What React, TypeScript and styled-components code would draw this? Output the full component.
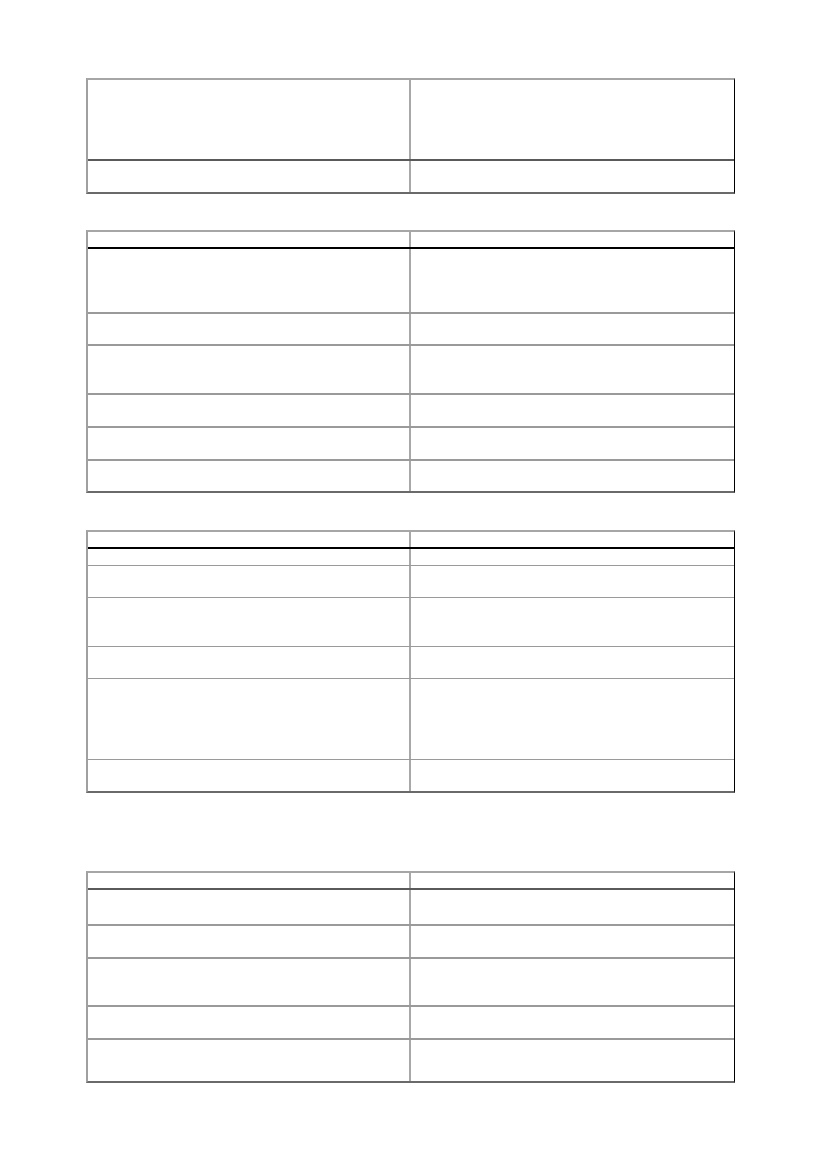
import React from 'react';
import styled, { createGlobalStyle } from 'styled-components';

const GlobalStyle = createGlobalStyle`
  html, body {
    margin: 0;
    padding: 0;
    background: #ffffff;
    font-family: "Liberation Sans", Arial, sans-serif;
  }
  * {
    box-sizing: border-box;
  }
`;

const Page = styled.main`
  width: 826px;
  min-height: 1169px;
  padding: 78px 0 0 86px;
  display: flex;
  flex-direction: column;
`;

const Table = styled.section<{ gap: number }>`
  width: 649px;
  margin-top: ${props => props.gap}px;
  border-top: 2px solid #a6a6a6;
  border-left: 2px solid #a0a0a0;
  border-right: 1px solid #000000;
  border-bottom: 2px solid #6a6a6a;
  display: flex;
  flex-direction: column;
`;

const Row = styled.div<{ h: number; line?: string; thick?: boolean }>`
  display: grid;
  grid-template-columns: 323px 1fr;
  height: ${props => props.h}px;
  border-top: ${props => (props.line ? `${props.thick ? 2 : 1}px solid ${props.line}` : 'none')};
`;

const Cell = styled.div`
  border-right: 2px solid #a8a8a8;
  &:last-child {
    border-right: none;
  }
`;

type TableSpec = {
  gap: number;
  header?: string;
  rowLine: string;
  rows: number[];
};

const tables: TableSpec[] = [
  { gap: 0, rowLine: '#5a5a5a', rows: [79, 33] },
  { gap: 36, header: '#000000', rowLine: '#9a9a9a', rows: [65, 32, 49, 33, 33, 32] },
  { gap: 37, header: '#000000', rowLine: '#9a9a9a', rows: [18, 32, 49, 32, 81, 32] },
  { gap: 78, header: '#5a5a5a', rowLine: '#9a9a9a', rows: [36, 33, 48, 33, 43] },
];

const App: React.FC = () => {
  return (
    <>
      <GlobalStyle />
      <Page>
        {tables.map((t, ti) => (
          <Table key={ti} gap={t.gap}>
            {t.header && (
              <Row h={15}>
                <Cell />
                <Cell />
              </Row>
            )}
            {t.rows.map((h, ri) => {
              const first = ri === 0;
              const line = first ? t.header : t.rowLine;
              return (
                <Row key={ri} h={h} line={line} thick={first ? true : ti === 0 || ti === 1 || ti === 3}>
                  <Cell />
                  <Cell />
                </Row>
              );
            })}
          </Table>
        ))}
      </Page>
    </>
  );
};

export default App;
